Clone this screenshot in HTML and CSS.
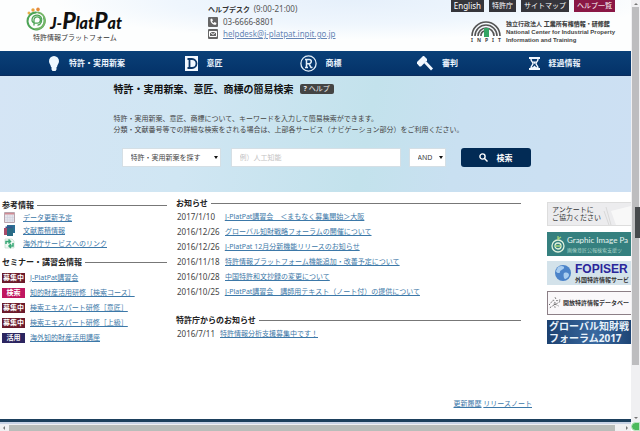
FILE: index.html
```html
<!DOCTYPE html>
<html lang="ja">
<head>
    <meta charset="UTF-8">
    <meta name="viewport" content="width=device-width, initial-scale=1.0">
    <title>J-PlatPat 特許情報プラットフォーム</title>
    <link rel="stylesheet" href="styles.css">
</head>
<body>
    <div class="window">
        <div class="page">
            <header class="header">
                <div class="brand">
                    <div class="brand-top">
                        <svg class="brand-icon" width="22" height="24" viewBox="0 0 22 24">
                            <circle cx="3" cy="6" r="1.5" fill="#e8b04a"/>
                            <circle cx="7" cy="3" r="1.7" fill="#e8a23c"/>
                            <circle cx="12" cy="2.4" r="1.8" fill="#e58a3c"/>
                            <g fill="none" stroke-linecap="round">
                                <path d="M10 5.500a8.500 8.500 0 1 0 8 5.500" stroke="#4da456" stroke-width="2"/>
                                <path d="M12 5.500a8.500 8.500 0 0 1 7 8c0 5-4 8.500-9 8.500" stroke="#74b567" stroke-width="2"/>
                                <path d="M8 18v-5a3.200 3.200 0 1 1 3 3.200c-3 0-5-1-5-3a5 5 0 0 1 9-3c2 3 0 7-3 8" stroke="#4da456" stroke-width="1.300"/>
                            </g>
                        </svg>
                        <span class="brand-name">J-<span class="big">P</span>lat<span class="big">P</span>at</span>
                    </div>
                    <div class="brand-sub">特許情報プラットフォーム</div>
                </div>

                <div class="helpdesk">
                    <div><b>ヘルプデスク</b>&nbsp; <span class="num">(9:00-21:00)</span></div>
                    <div class="contact">
                        <svg width="10" height="10" viewBox="0 0 10 10"><rect width="10" height="10" rx="1" fill="#666"/><path d="M2.500 2l1.500-.5 1 2-1 .8c.3.900.8 1.400 1.700 1.800l.8-1 2 1-.5 1.600C5 8.500 2 5.500 2.500 2z" fill="#fff"/></svg>
                        <span class="num">03-6666-8801</span>
                    </div>
                    <div class="contact">
                        <svg width="10" height="10" viewBox="0 0 10 10"><rect width="10" height="10" rx="1" fill="#666"/><path d="M1.500 2.500h7v5h-7zM1.500 2.500L5 5.500l3.500-3" fill="none" stroke="#fff"/></svg>
                        <a class="num" href="mailto:helpdesk@j-platpat.inpit.go.jp">helpdesk@j-platpat.inpit.go.jp</a>
                    </div>
                </div>

                <div class="header-right">
                    <div class="utility">
                        <a class="en" href="#">English</a>
                        <a href="#">特許庁</a>
                        <a href="#">サイトマップ</a>
                        <a class="help" href="#">ヘルプ一覧</a>
                    </div>
                    <div class="inpit">
                        <div class="inpit-mark">
                            <svg width="30" height="17" viewBox="0 0 30 17">
                                <g fill="none" stroke="#555" stroke-width="1.600">
                                    <path d="M1 16A14 14 0 0 1 29 16"/>
                                    <path d="M4 16A11 11 0 0 1 26 16"/>
                                    <path d="M7 16A8 8 0 0 1 23 16"/>
                                    <path d="M10 16A5 5 0 0 1 13 11"/>
                                </g>
                                <path d="M13 8h5v9h-5z" fill="#35a565"/>
                            </svg>
                            <div class="inpit-name"><span>I</span><span>N</span><span>P</span><span>I</span><span>T</span></div>
                        </div>
                        <div class="inpit-text">
                            <div>独立行政法人 <b>工業所有権情報・研修館</b></div>
                            <div>National Center for Industrial Property</div>
                            <div>Information and Training</div>
                        </div>
                    </div>
                </div>
            </header>

            <nav class="nav">
                <a href="#">
                    <svg width="12" height="17" viewBox="0 0 12 17"><path d="M6 1a5 5 0 0 1 5 5.200c0 2-1.600 3.300-2 5.800H3C2.600 9.500 1 8.200 1 6.200A5 5 0 0 1 6 1zM3.500 12h5v2.500L7.500 16h-3l-1-1.500z" fill="#eef8ff"/></svg>
                    特許・実用新案
                </a>
                <a href="#">
                    <svg width="13" height="15" viewBox="0 0 13 15"><path d="M0 0h13v15H0z" fill="#f2f8ff"/><path d="M2.500 3H7a4.500 4.500 0 0 1 0 9H2.500M4.500 3v9" fill="none" stroke="#0b3566" stroke-width="1.800"/></svg>
                    意匠
                </a>
                <a href="#">
                    <svg width="17" height="17" viewBox="0 0 17 17" fill="none" stroke="#e4f0fa"><circle cx="8.500" cy="8.500" r="7.600" stroke-width="1.300"/><path d="M6.500 4v9M5 4.500h4.200a2 2 0 0 1 0 4.200H7M9 8.700l2 3.800h1.500M5 12.500h3" stroke-width="1.500"/></svg>
                    商標
                </a>
                <a href="#">
                    <svg width="16" height="16" viewBox="0 0 16 16" fill="#f2f8ff"><path d="M0 7l6-6 1 0 3 3 0 1.500-6 6-1.500 0L0 8.500z"/><path d="M7 8l2-2 7 7.500-2 2z"/></svg>
                    審判
                </a>
                <a href="#">
                    <svg width="11" height="13" viewBox="0 0 11 13"><path d="M0 1h11M0 12h11" stroke="#f2f8ff" stroke-width="2"/><path d="M2 2c0 2.500 2 3 2 4.500S2 9 2 11h7c0-2-2-3-2-4.500S9 4.500 9 2" fill="none" stroke="#f2f8ff" stroke-width="1.400"/><path d="M3.500 4.500h4L5.500 7zM3 11l2.500-2.500L8 11z" fill="#f2f8ff"/></svg>
                    経過情報
                </a>
            </nav>

            <section class="hero">
                <div class="hero-title">
                    <h1>特許・実用新案、意匠、商標の簡易検索</h1>
                    <a class="help-badge" href="#"><b>?</b> ヘルプ</a>
                </div>
                <p>特許・実用新案、意匠、商標について、キーワードを入力して簡易検索ができます。<br>分類・文献番号等での詳細な検索をされる場合は、上部各サービス（ナビゲーション部分）をご利用ください。</p>
                <form class="search">
                    <div class="select-box target">
                        <select aria-label="検索対象">
                            <option>特許・実用新案を探す</option>
                            <option>意匠を探す</option>
                            <option>商標を探す</option>
                        </select>
                    </div>
                    <input type="text" aria-label="キーワード" placeholder="例）人工知能">
                    <div class="select-box operator">
                        <select aria-label="検索方式">
                            <option>AND</option>
                            <option>OR</option>
                        </select>
                    </div>
                    <button type="button">
                        <svg width="9" height="9" viewBox="0 0 9 9" fill="none" stroke="#fff" stroke-width="1.400"><circle cx="3.500" cy="3.500" r="2.600"/><path d="M5.500 5.500L8.500 8.500"/></svg>
                        検索
                    </button>
                </form>
            </section>

            <main class="main">
                <aside class="side">
                    <h2>参考情報</h2>
                    <ul class="refs">
                        <li>
                            <svg width="11" height="11" viewBox="0 0 11 11"><path d="M.5.500h10v10H.5z" fill="#e4e4ea" stroke="#b9a5ae"/><path d="M1 1h9v1.500H1z" fill="#d18b94"/><path d="M3.500 3v7M6 3v7M8.500 3v7M1 5.500h9M1 8h9" stroke="#ccd" stroke-width=".5"/></svg>
                            <a href="#">データ更新予定</a>
                        </li>
                        <li>
                            <svg width="11" height="11" viewBox="0 0 11 11"><path d="M3 0h8v8H3z" fill="#2b6f94"/><path d="M1.500 1.500h7v8h-7z" fill="#39518a"/><path d="M0 3h3v7H0z" fill="#a84b69"/><path d="M3 3h6v8H3z" fill="#2a6a83"/></svg>
                            <a href="#">文献蓄積情報</a>
                        </li>
                        <li>
                            <svg width="11" height="11" viewBox="0 0 11 11"><path d="M1 1h7l2 2v7H1z" fill="#eef8f2" stroke="#b6d5c5" stroke-width=".6"/><path d="M2 6V3.500h4M4.500 1.500l2 2-2 2M9 5v3H5.500M7 6L5 8l2 2" fill="none" stroke="#3aa877" stroke-width="1.500"/></svg>
                            <a href="#">海外庁サービスへのリンク</a>
                        </li>
                    </ul>
                    <h2 class="seminar-title">セミナー・講習会情報</h2>
                    <ul class="seminars">
                        <li><span class="tag open">募集中</span><a href="#">J-PlatPat講習会</a></li>
                        <li><span class="tag find">検索</span><a href="#">知的財産活用研修［検索コース］</a></li>
                        <li><span class="tag open">募集中</span><a href="#">検索エキスパート研修［意匠］</a></li>
                        <li><span class="tag open">募集中</span><a href="#">検索エキスパート研修［上級］</a></li>
                        <li><span class="tag use">活用</span><a href="#">海外知的財産活用講座</a></li>
                    </ul>
                </aside>

                <div class="news-column">
                    <h2>お知らせ</h2>
                    <ul class="news">
                        <li><span class="num">2017/1/10</span><a href="#">J-PlatPat講習会　＜まもなく募集開始＞大阪</a></li>
                        <li><span class="num">2016/12/26</span><a href="#">グローバル知財戦略フォーラムの開催について</a></li>
                        <li><span class="num">2016/12/26</span><a href="#">J-PlatPat 12月分新機能リリースのお知らせ</a></li>
                        <li><span class="num">2016/11/18</span><a href="#">特許情報プラットフォーム機能追加・改善予定について</a></li>
                        <li><span class="num">2016/10/28</span><a href="#">中国特許和文抄録の変更について</a></li>
                        <li><span class="num">2016/10/25</span><a href="#">J-PlatPat講習会　講師用テキスト（ノート付）の提供について</a></li>
                    </ul>
                    <h2 class="jpo-title">特許庁からのお知らせ</h2>
                    <ul class="news short">
                        <li><span class="num">2016/7/11</span><a href="#">特許情報分析支援募集中です！</a></li>
                    </ul>
                </div>

                <div class="banners">
                    <a class="banner survey" href="#">
                        <span>アンケートに<br>ご協力ください</span>
                        <svg width="30" height="22" viewBox="0 0 30 22"><path d="M4 4l5 18M2 8l5 14" stroke="#d8d8d8"/><path d="M9 8l20-5v19H14z" fill="#f8f8f8"/></svg>
                    </a>
                    <a class="banner graphic" href="#">
                        <svg width="15" height="18" viewBox="0 0 15 18" fill="none" stroke="#dff0dc" stroke-width="1.300"><circle cx="7" cy="11" r="6"/><circle cx="7" cy="11" r="3"/><path d="M4 11h6M7 5V1M7 4l3-2" stroke="#a8d67b"/></svg>
                        <span class="lines"><span class="graphic-name">Graphic Image Pa</span><span>画像意匠公報検索支援ツ</span></span>
                    </a>
                    <a class="banner fopiser" href="#">
                        <svg width="18" height="18" viewBox="0 0 18 18"><circle cx="9" cy="9" r="8" fill="#4b83c9"/><path d="M4 3c3-2 7-1 6 1s-4 2-4 4-4 1-4-1zM10 9c3-1 5 0 5 2s-3 4-4 4-2-4-1-6z" fill="#a9cdf0"/></svg>
                        <span class="lines"><span class="fopiser-name">FOPISER</span><span>外国特許情報サービ</span></span>
                    </a>
                    <a class="banner patent-db" href="#">
                        <svg width="13" height="13" viewBox="0 0 15 14" fill="none" stroke="#555" stroke-dasharray="2 1.500"><path d="M0 10l5-6 3 5 6-4M1 13l6-4 4 2M7 1l2 4 4-1M6 8l1 5"/></svg>
                        <span>開放特許情報データベー</span>
                    </a>
                    <a class="banner forum" href="#">
                        <span class="lines"><span>グローバル知財戦</span><span>フォーラム2017</span></span>
                    </a>
                </div>
            </main>

            <div class="release-links">
                <a href="#">更新履歴</a>
                <a href="#">リリースノート</a>
            </div>
            <footer class="footer-line"></footer>
        </div>

        <div class="scroll-y">
            <span class="arrow up"></span>
            <span class="thumb"></span>
            <span class="grip"></span>
            <span class="arrow down"></span>
        </div>
        <div class="scroll-x">
            <span class="arrow left"></span>
            <span class="thumb"></span>
            <span class="arrow right"></span>
        </div>
        <div class="corner"></div>
    </div>
</body>
</html>
```

FILE: styles.css
```css
* {
    box-sizing: border-box;
}
body {
    margin: 0;
    font-family: "Noto Sans", "Noto Sans CJK JP", sans-serif;
    font-size: 7px;
    line-height: 12px;
    color: #444;
    background: #fff;
}
h1, h2, p, ul {
    margin: 0;
    padding: 0;
}
ul {
    list-style: none;
}
a {
    color: #3c78a8;
}
svg {
    display: block;
    flex-shrink: 0;
}
.num {
    font-size: 8px;
}
.window {
    display: grid;
    grid-template-columns: minmax(0, 1fr) 9px;
    grid-template-rows: 1fr 9px;
    min-height: 100vh;
}
.page {
    display: flex;
    flex-direction: column;
    overflow: hidden;
}

/* header */
.header {
    display: flex;
    height: 51px;
    padding: 0 16px 0 26px;
    background: radial-gradient(ellipse 300px 40px at 56% 0, #e6f0fb, #eff6fd 60%, #fdfefe 100%);
}
.brand {
    width: 182px;
    padding-top: 7px;
}
.brand-top {
    display: flex;
    height: 25px;
    gap: 2px;
}
.brand-name {
    font-family: Lato, sans-serif;
    font-size: 16px;
    font-weight: 900;
    font-style: italic;
    line-height: 26px;
    color: #111;
    white-space: nowrap;
}
.brand-name .big {
    font-size: 23px;
}
.brand-sub {
    padding-left: 7px;
    color: #333;
}
.helpdesk {
    padding-top: 3px;
    color: #555;
}
.helpdesk b {
    color: #333;
}
.contact {
    display: flex;
    align-items: center;
    gap: 5px;
}
.contact a {
    color: #6686b5;
}
.header-right {
    display: flex;
    flex-direction: column;
    align-items: flex-end;
    margin-left: auto;
}
.utility {
    display: flex;
    gap: 5px;
}
.utility a {
    padding: 0 3px;
    color: #fff;
    background: #35353b;
    text-decoration: none;
}
.utility .en {
    font-size: 8px;
}
.utility .help {
    background: #8a1745;
}
.inpit {
    display: flex;
    gap: 5px;
    margin-top: 8px;
}
.inpit-name {
    display: flex;
    justify-content: space-between;
    font-size: 5px;
    font-weight: bold;
    line-height: 7px;
}
.inpit-text {
    font-family: "Liberation Sans", "Noto Sans CJK JP", sans-serif;
    font-size: 6px;
    font-weight: bold;
    line-height: 8px;
    white-space: nowrap;
}

/* navigation */
.nav {
    display: grid;
    grid-template-columns: repeat(5, 1fr);
    height: 25px;
    padding: 0 18px 0 28px;
    background: linear-gradient(#0a4078, #043268);
    border-bottom: 1px solid #0b2c5c;
}
.nav a {
    display: flex;
    align-items: center;
    justify-content: center;
    gap: 9px;
    font-size: 8px;
    font-weight: bold;
    color: #eef6ff;
    text-decoration: none;
}

/* simple search */
.hero {
    padding: 7px 18px 25px 18%;
    background: linear-gradient(100deg, #d5e5f5 0%, #d0e6f3 30%, #c3e2ec 58%, #c9e0f1 72%, #cde0f3 100%);
}
.hero-title {
    display: flex;
    align-items: center;
    gap: 6px;
}
h1 {
    font-size: 10px;
    line-height: 12px;
    color: #111;
}
.help-badge {
    padding: 0 4px;
    line-height: 10px;
    color: #eee;
    background: #444;
    border-radius: 2px;
    text-decoration: none;
}
.hero p {
    margin-top: 18px;
    line-height: 11px;
}
.search {
    display: flex;
    height: 19px;
    margin-top: 13px;
    padding-left: 8px;
}
.search select,
.search input,
.search button {
    height: 100%;
    margin: 0;
    font-family: inherit;
    font-size: 7px;
}
.search select,
.search input {
    width: 100%;
    padding: 0 8px;
    color: #444;
    background: #fff;
    border: 1px solid #d5dfe5;
    border-radius: 0;
    appearance: none;
}
.search input {
    width: 170px;
    margin: 0 8px 0 10px;
}
.search input::placeholder {
    color: #c4c4c4;
}
.select-box {
    position: relative;
}
.select-box::after {
    content: "";
    position: absolute;
    top: 8px;
    right: 3px;
    border: 2px solid transparent;
    border-top: 3px solid #111;
    border-bottom: 0;
}
.target {
    width: 99px;
}
.operator {
    width: 37px;
}
.search button {
    display: flex;
    align-items: center;
    justify-content: center;
    gap: 9px;
    width: 70px;
    margin-left: 15px;
    font-size: 8px;
    font-weight: bold;
    color: #fff;
    background: #022b55;
    border: 0;
    border-radius: 3px;
}

/* columns */
.main {
    display: grid;
    grid-template-columns: 165px minmax(0, 1fr) 84px;
    padding-left: 2px;
}
h2 {
    display: flex;
    align-items: center;
    gap: 3px;
    font-size: 8px;
    line-height: 12px;
    color: #222;
}
h2::after {
    content: "";
    flex: 1;
    height: 1px;
    background: #777;
}
.side {
    padding-top: 7px;
}
.refs li {
    display: flex;
    align-items: center;
    gap: 8px;
    height: 13px;
    padding-left: 2px;
}
.seminar-title {
    margin: 6px 0 2px;
}
.seminars li {
    display: flex;
    align-items: center;
    gap: 5px;
    height: 15px;
}
.tag {
    width: 23px;
    line-height: 10px;
    font-weight: bold;
    text-align: center;
    color: #fff;
}
.tag.open {
    background: #6b1a2b;
}
.tag.find {
    background: #c01660;
}
.tag.use {
    background: #2c2560;
}
.news-column {
    padding: 5px 26px 0 9px;
}
.news li {
    display: grid;
    grid-template-columns: 48px 1fr;
    line-height: 15px;
    padding-left: 1px;
}
.news.short li {
    grid-template-columns: 43px 1fr;
}
.jpo-title {
    margin-top: 15px;
}

/* banners run past the right edge of the page */
.banners {
    display: grid;
    gap: 5px;
    padding-top: 10px;
}
.banner {
    display: flex;
    align-items: center;
    gap: 4px;
    width: 120px;
    height: 24px;
    padding: 0 4px;
    line-height: 8px;
    color: #333;
    text-decoration: none;
    white-space: nowrap;
}
.lines {
    display: flex;
    flex-direction: column;
}
.survey {
    gap: 1px;
    background: #ececee;
    border: 1px solid #ddd;
}
.graphic {
    gap: 1px;
    font-size: 5px;
    color: #a9d3c8;
    background: #35807f;
}
.graphic-name {
    font-family: Lato, sans-serif;
    font-size: 8px;
    line-height: 12px;
    color: #e8f5f0;
}
.fopiser {
    gap: 3px;
    padding-left: 7px;
    font-size: 6px;
    font-weight: bold;
    line-height: 9px;
    background: #d3e2ea;
}
.fopiser-name {
    font-family: "Liberation Sans", sans-serif;
    font-size: 12px;
    line-height: 14px;
    color: #2a259b;
}
.patent-db {
    gap: 1px;
    padding-left: 1px;
    font-size: 6px;
    font-weight: bold;
    background: #faf8fa;
    border: 1px solid #8c7f86;
}
.forum {
    padding: 0 2px;
    font-size: 10px;
    font-weight: bold;
    line-height: 12px;
    color: #e9f3fb;
    background: linear-gradient(90deg, #1c4170, #3969a0 40%, #1e4575 70%, #315f95);
}

.release-links {
    margin-top: auto;
    padding: 0 99px 9px 0;
    text-align: right;
}
.footer-line {
    height: 3px;
    background: #1d405d;
}

/* scroll bars */
.scroll-y,
.scroll-x {
    display: flex;
    align-items: center;
    background: #f0f0f2;
}
.scroll-y {
    flex-direction: column;
    position: relative;
    padding: 3px 1px;
}
.scroll-y .thumb {
    width: 7px;
    height: 86%;
    margin: 2px 0 auto;
    background: #bdbdbf;
}
.scroll-y .grip {
    position: absolute;
    top: 49%;
    right: 0;
    width: 5px;
    height: 31px;
    background: #46494c;
}
.scroll-x {
    padding: 0 3px;
    border-top: 2px solid #c9d4e6;
}
.scroll-x .thumb {
    width: 97%;
    height: 6px;
    margin: 0 auto 0 4px;
    background: #b9bdba;
}
.arrow {
    border: 2px solid transparent;
}
.arrow.up {
    border-top: 0;
    border-bottom-color: #777;
}
.arrow.down {
    border-bottom: 0;
    border-top-color: #777;
}
.arrow.left {
    border-left: 0;
    border-right-color: #777;
}
.arrow.right {
    border-right: 0;
    border-left-color: #777;
}
.corner {
    background: #4cba5b;
    border: 1px solid #bfe5c4;
    border-radius: 9px 0 0 9px;
}
```
